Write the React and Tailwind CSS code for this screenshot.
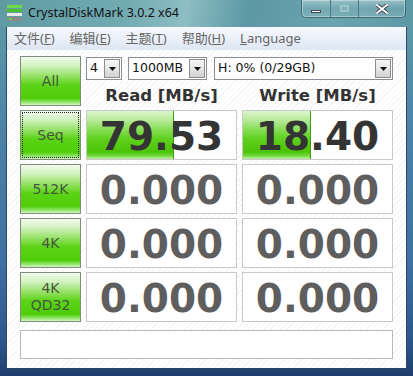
import React from "react";

const SANS = "font-['DejaVu_Sans',sans-serif]";

function GreenBtn({ children, focus }) {
  return (
    <div className="h-[50px] border border-[#7f8e7b] bg-[linear-gradient(180deg,#f3fbef_0%,#d2f2c0_18%,#8fe05c_42%,#5ad316_58%,#4fcd08_86%,#8fe56a_94%,#d4f6c4_100%)] p-[1px]">
      <div
        className={
          "h-full w-full flex flex-col items-center justify-center text-[14px] leading-[17px] text-[#44573d] " +
          SANS +
          (focus ? " border border-dotted border-[#222]" : " border border-transparent")
        }
      >
        {children}
      </div>
    </div>
  );
}

function Meter({ value, fill, dark }) {
  return (
    <div className="relative h-[50px] border border-[#c9c9c9] bg-white flex items-center justify-center overflow-hidden">
      {fill ? (
        <div
          className="absolute left-0 top-0 bottom-0 border-r border-[#3d9c10] bg-[linear-gradient(180deg,#dcf5cf_0%,#b9eb9c_18%,#84dc52_40%,#5fd01e_58%,#4dc307_85%,#6fd83a_93%,#c2efa8_100%)]"
          style={{ width: fill }}
        />
      ) : null}
      <span
        className={
          "relative font-bold text-[39px] leading-none pt-[2px] " +
          SANS +
          (dark ? " text-[#343434]" : " text-[#5e5e5e]")
        }
      >
        {value}
      </span>
    </div>
  );
}

function Combo({ w, text }) {
  return (
    <div
      className="h-[23px] border border-[#8b8d90] bg-white flex items-center justify-between"
      style={{ width: w }}
    >
      <span className={"pl-[3px] text-[12.5px] text-[#111] leading-none " + SANS}>{text}</span>
      <div className="w-[16px] h-[19px] mr-[1px] border border-[#8c8c8c] bg-[linear-gradient(180deg,#f6f6f6_0%,#e6e6e6_50%,#d2d2d2_100%)] flex items-center justify-center">
        <svg width="7" height="4" viewBox="0 0 7 4">
          <path d="M0 0h7L3.5 4z" fill="#111" />
        </svg>
      </div>
    </div>
  );
}

export default function App() {
  return (
    <div className="w-[413px] h-[376px] flex flex-col overflow-hidden bg-[linear-gradient(180deg,#69a5ad_0%,#5b97a6_8%,#4b83a6_35%,#3f70a2_70%,#2c5488_92%,#1e3d6c_100%)]">
      {/* Title bar */}
      <div className="h-[27px] flex items-start relative bg-[linear-gradient(100deg,#5f9ba3_0%,#72aab2_30%,#8cbec2_45%,#5c97a4_60%,#6aa4ae_80%,#5d99a5_100%)]">
        <svg className="mt-[5px] ml-[7px]" width="15" height="16" viewBox="0 0 15 16">
          <rect x="0" y="0" width="15" height="3" fill="#6fd84a" />
          <rect x="0" y="4" width="15" height="3" fill="#4cc02a" />
          <rect x="0" y="8" width="15" height="3" fill="#e8e8e8" />
          <rect x="0" y="12" width="15" height="4" fill="#8a8a8a" />
          <rect x="2" y="13" width="3" height="2" fill="#5bd13a" />
        </svg>
        <span className="ml-[6px] mt-[5px] text-[12.5px] leading-[16px] text-[#111] font-['Noto_Sans',sans-serif]">
          CrystalDiskMark 3.0.2 x64
        </span>
        <div className="ml-auto mr-[7px] flex h-[18px] border border-t-0 border-[#3d6b78] rounded-b-[5px] overflow-hidden shadow-[inset_0_0_0_1px_rgba(255,255,255,0.35)]">
          <div className="w-[29px] h-full flex items-center justify-center border-r border-[#4a7884] bg-[linear-gradient(180deg,rgba(255,255,255,0.35),rgba(255,255,255,0.08)_50%,rgba(255,255,255,0.15))]">
            <div className="w-[10px] h-[3px] bg-white border border-[#445] mt-[5px]" />
          </div>
          <div className="w-[28px] h-full flex items-center justify-center border-r border-[#4a7884] bg-[linear-gradient(180deg,rgba(255,255,255,0.3),rgba(255,255,255,0.06)_50%,rgba(255,255,255,0.12))]">
            <div className="w-[9px] h-[7px] border-2 border-[#9cc4ca] bg-[#7fb0b8]" />
          </div>
          <div className="w-[46px] h-full flex items-center justify-center bg-[linear-gradient(180deg,rgba(255,255,255,0.35),rgba(255,255,255,0.08)_50%,rgba(255,255,255,0.15))]">
            <svg width="12" height="10" viewBox="0 0 12 10">
              <path d="M1 1L11 9M11 1L1 9" stroke="#334" strokeWidth="3.6" strokeLinecap="square" />
              <path d="M1 1L11 9M11 1L1 9" stroke="#fff" strokeWidth="2" strokeLinecap="square" />
            </svg>
          </div>
        </div>
      </div>

      {/* Client */}
      <div className="flex-1 mx-[7px] mb-[8px] flex flex-col shadow-[0_0_0_1px_#2a4668]">
        {/* Menu */}
        <div className="h-[23px] flex items-center gap-[13px] pl-[7px] bg-[linear-gradient(180deg,#f7f9fd_0%,#eaf0f8_50%,#dde6f3_100%)] text-[13px] text-[#666] font-['Noto_Sans','Noto_Sans_CJK_SC',sans-serif] leading-none">
          <span>文件(<span className="underline">F</span>)</span>
          <span className="ml-[2px]">编辑(<span className="underline">E</span>)</span>
          <span className="ml-[2px]">主题(<span className="underline">T</span>)</span>
          <span className="ml-[2px]">帮助(<span className="underline">H</span>)</span>
          <span className="ml-[2px]"><span className="underline">L</span>anguage</span>
        </div>

        {/* Content */}
        <div className="flex-1 px-[13px] pt-[6px] bg-[repeating-linear-gradient(135deg,#ffffff_0px,#ffffff_3px,#f4f4f4_3px,#f4f4f4_4px)]">
          <div className="grid grid-cols-[61px_151px_151px] gap-x-[5px] gap-y-[4px]">
            <GreenBtn>All</GreenBtn>
            <div className="col-span-2 h-[50px] flex flex-col">
              <div className="mt-[1px] flex">
                <Combo w={36} text="4" />
                <div className="ml-[6px]">
                  <Combo w={79} text="1000MB" />
                </div>
                <div className="ml-[7px]">
                  <Combo w={179} text="H: 0% (0/29GB)" />
                </div>
              </div>
              <div className="grid grid-cols-2 gap-x-[5px] mt-[6px]">
                <div className={"text-center font-bold text-[16.5px] leading-[20px] text-[#333] " + SANS}>Read [MB/s]</div>
                <div className={"text-center font-bold text-[16.5px] leading-[20px] text-[#333] " + SANS}>Write [MB/s]</div>
              </div>
            </div>

            <GreenBtn focus>Seq</GreenBtn>
            <Meter value="79.53" fill={87} dark />
            <Meter value="18.40" fill={68} dark />

            <GreenBtn>512K</GreenBtn>
            <Meter value="0.000" />
            <Meter value="0.000" />

            <GreenBtn>4K</GreenBtn>
            <Meter value="0.000" />
            <Meter value="0.000" />

            <GreenBtn>
              <span>4K</span>
              <span>QD32</span>
            </GreenBtn>
            <Meter value="0.000" />
            <Meter value="0.000" />
          </div>
          <div className="mt-[8px] h-[29px] border border-[#b9b9b9] bg-white" />
        </div>
      </div>
    </div>
  );
}
